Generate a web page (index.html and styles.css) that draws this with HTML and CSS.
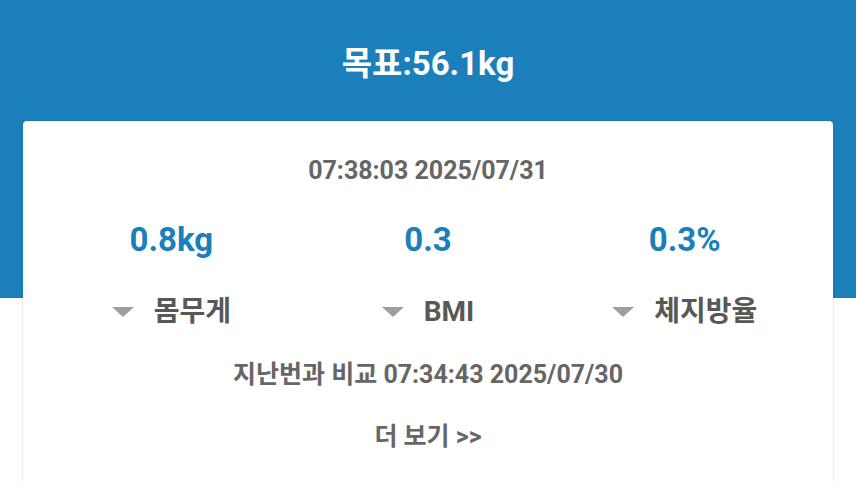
FILE: index.html
```html
<!DOCTYPE html>
<html lang="ko">
<head>
<meta charset="utf-8">
<link rel="stylesheet" href="styles.css">
</head>
<body>
<div class="page">
  <div class="goal">목표:56.1kg</div>
  <div class="card">
    <div class="date">07:38:03 2025/07/31</div>
    <div class="stats">
      <div class="stat">
        <div class="value">0.8kg</div>
        <div class="label"><span class="tri"></span><span>몸무게</span></div>
      </div>
      <div class="stat">
        <div class="value">0.3</div>
        <div class="label"><span class="tri"></span><span>BMI</span></div>
      </div>
      <div class="stat">
        <div class="value">0.3%</div>
        <div class="label"><span class="tri"></span><span>체지방율</span></div>
      </div>
    </div>
    <div class="compare">지난번과 비교 07:34:43 2025/07/30</div>
    <div class="more">더 보기 &gt;&gt;</div>
  </div>
</div>
</body>
</html>
```
FILE: styles.css
```css
html, body {
  margin: 0;
  padding: 0;
}
body {
  width: 856px;
  height: 482px;
  overflow: hidden;
  font-family: Roboto, "Noto Sans CJK KR", sans-serif;
  font-weight: 700;
  background: linear-gradient(#1b7fbb 0, #1b7fbb 298px, #ffffff 298px);
}
.page {
  height: 482px;
  display: flex;
  flex-direction: column;
}
.goal {
  box-sizing: border-box;
  height: 121px;
  padding-top: 44px;
  line-height: 40px;
  font-size: 33px;
  color: #ffffff;
  text-align: center;
}
.card {
  flex: 1;
  margin: 0 23px;
  background: #ffffff;
  border-radius: 4px 4px 0 0;
  box-shadow: 0 0 2px rgba(0,0,0,0.25);
  padding: 34px 20px 0;
  display: flex;
  flex-direction: column;
  align-items: stretch;
  color: #666666;
}
.date {
  line-height: 32px;
  font-size: 25px;
  text-align: center;
}
.stats {
  margin-top: 33px;
  display: grid;
  grid-template-columns: 1fr 1fr 1fr;
}
.stat {
  display: flex;
  flex-direction: column;
  align-items: center;
}
.value {
  line-height: 40px;
  font-size: 33px;
  color: #1b7fbb;
}
.label {
  margin-top: 32px;
  line-height: 40px;
  font-size: 28px;
  color: #585858;
  display: flex;
  align-items: center;
  gap: 20px;
}
.tri {
  width: 0;
  height: 0;
  border-left: 11px solid transparent;
  border-right: 11px solid transparent;
  border-top: 10px solid #9e9e9e;
}
.compare {
  margin-top: 27px;
  line-height: 32px;
  font-size: 25px;
  text-align: center;
}
.more {
  margin-top: 30px;
  line-height: 32px;
  font-size: 25px;
  text-align: center;
}
```
